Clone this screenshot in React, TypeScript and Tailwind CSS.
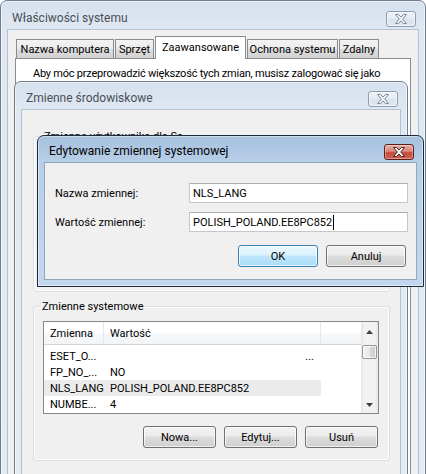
import React from "react";

function CloseX({ active }: { active: boolean }) {
  return (
    <div
      className={
        active
          ? "w-[30px] h-[16px] rounded-[3px] border border-[#5b1e18] bg-[linear-gradient(180deg,#e9aea4_0%,#db8577_45%,#c64a3c_55%,#cf6354_100%)] flex items-center justify-center shadow-[inset_0_0_0_1px_rgba(255,255,255,0.35)]"
          : "w-[30px] h-[16px] rounded-[3px] border border-[#8e9caf] bg-[linear-gradient(180deg,#eef3f8_0%,#e4ebf3_50%,#d8e2ed_51%,#dfe7f1_100%)] flex items-center justify-center shadow-[inset_0_0_0_1px_rgba(255,255,255,0.6)]"
      }
    >
      <svg width="12" height="10" viewBox="0 0 12 10">
        <polygon
          points="0.5,0.5 3.5,0.5 6,3 8.5,0.5 11.5,0.5 7.7,5 11.5,9.5 8.5,9.5 6,7 3.5,9.5 0.5,9.5 4.3,5"
          fill={active ? "#ffffff" : "#eef1f5"}
          stroke={active ? "#4a2a27" : "#838c98"}
          strokeWidth="1"
          strokeLinejoin="round"
        />
      </svg>
    </div>
  );
}

function WinButton({ label, def, w }: { label: string; def?: boolean; w: string }) {
  return (
    <div
      className={
        def
          ? `${w} h-[22px] rounded-[3px] border border-[#3c7fb1] bg-[linear-gradient(180deg,#ecf7fd_0%,#dbf1fc_45%,#bfe7fd_50%,#aadbf6_100%)] flex items-center justify-center shadow-[inset_0_0_0_1px_rgba(255,255,255,0.7)]`
          : `${w} h-[22px] rounded-[3px] border border-[#707070] bg-[linear-gradient(180deg,#f2f2f2_0%,#ebebeb_45%,#dddddd_50%,#cfcfcf_100%)] flex items-center justify-center shadow-[inset_0_0_0_1px_rgba(255,255,255,0.7)]`
      }
    >
      {label}
    </div>
  );
}

function Tab({ label, w, selected }: { label: string; w: string; selected?: boolean }) {
  return (
    <div
      className={
        selected
          ? `${w} h-[23px] -mb-[1px] relative z-10 border border-b-0 border-[#898c95] bg-white flex items-start justify-center pt-[3px] whitespace-nowrap`
          : `${w} h-[19px] border border-b-0 border-[#898c95] bg-[linear-gradient(180deg,#f3f3f3_0%,#ebebeb_50%,#dddddd_51%,#d2d2d2_100%)] flex items-center justify-center whitespace-nowrap`
      }
    >
      {label}
    </div>
  );
}

export default function App() {
  return (
    <div className="relative w-[426px] h-[474px] overflow-hidden bg-white font-['Roboto',sans-serif] text-[11px] leading-[15px] text-black">
      {/* Outer window: Właściwości systemu */}
      <div className="absolute left-0 top-0 w-[426px] h-[520px] flex flex-col rounded-t-[7px] border border-[#707d8c] bg-[linear-gradient(180deg,#d6e1ee_0px,#dfe8f2_28px,#e3ebf4_100%)] shadow-[inset_0_0_0_1px_rgba(255,255,255,0.5)]">
        <div className="h-[28px] shrink-0 flex items-center justify-between pl-[11px] pr-[9px] pt-[7px]">
          <span className="text-[12px] text-[#4a4f57]">Właściwości systemu</span>
          <CloseX active={false} />
        </div>
        <div className="mx-[6px] flex-1 flex flex-col border border-[#b3c1d1] bg-[#f0f0f0] pt-[6px] pl-[7px]">
          <div className="flex items-end gap-[1px] ml-[1px] h-[22px]">
            <Tab label="Nazwa komputera" w="w-[98px]" />
            <Tab label="Sprzęt" w="w-[39px]" />
            <Tab label="Zaawansowane" w="w-[91px]" selected />
            <Tab label="Ochrona systemu" w="w-[91px]" />
            <Tab label="Zdalny" w="w-[40px]" />
          </div>
          <div className="w-[396px] flex-1 border border-[#898c95] bg-white pt-[7px] pl-[17px]">
            <div className="whitespace-nowrap tracking-[-0.22px]">Aby móc przeprowadzić większość tych zmian, musisz zalogować się jako</div>
          </div>
        </div>
      </div>

      {/* Zmienne środowiskowe */}
      <div className="absolute left-[14px] top-[81px] w-[394px] h-[400px] flex flex-col rounded-t-[7px] border border-[#707d8c] bg-[linear-gradient(180deg,#d6e1ee_0px,#dfe8f2_28px,#e3ebf4_100%)] shadow-[inset_0_0_0_1px_rgba(255,255,255,0.5)]">
        <div className="h-[27px] shrink-0 flex items-center justify-between pl-[11px] pr-[9px] pt-[6px]">
          <span className="text-[12px] text-[#4a4f57]">Zmienne środowiskowe</span>
          <CloseX active={false} />
        </div>
        <div className="mx-[6px] flex-1 flex flex-col border border-[#b3c1d1] bg-[#f0f0f0] pl-[11px]">
          {/* user variables group */}
          <div className="relative mt-[26px] w-[357px] h-[156px] shrink-0 rounded-[3px] border border-[#d5dfe5] shadow-[inset_0_0_0_1px_#ffffff]">
            <span className="absolute -top-[8px] left-[9px] px-[1px] bg-[#f0f0f0] whitespace-nowrap">Zmienne użytkownika dla Sa</span>
          </div>
          {/* system variables group */}
          <div className="relative mt-[14px] w-[357px] h-[155px] shrink-0 rounded-[3px] border border-[#d5dfe5] shadow-[inset_0_0_0_1px_#ffffff] pt-[14px] pl-[9px] pr-[11px]">
            <span className="absolute -top-[8px] left-[7px] px-[1px] bg-[#f0f0f0] whitespace-nowrap">Zmienne systemowe</span>
            <div className="w-[336px] h-[93px] border border-[#828790] bg-white flex overflow-hidden">
              <div className="flex-1 flex flex-col">
                <div className="h-[23px] shrink-0 flex border-b border-[#d5d5d5] bg-[linear-gradient(180deg,#ffffff_0%,#ffffff_50%,#f7f8fa_51%,#f3f4f6_100%)]">
                  <div className="w-[60px] border-r border-[#e3e8ee] pl-[6px] flex items-center">Zmienna</div>
                  <div className="w-[217px] border-r border-[#e3e8ee] pl-[6px] flex items-center">Wartość</div>
                  <div className="flex-1" />
                </div>
                <div className="pt-[3px] flex flex-col">
                  <div className="h-[16px] flex items-center w-[277px]">
                    <div className="w-[60px] pl-[6px] whitespace-nowrap">ESET_O...</div>
                    <div className="w-[217px] pr-[7px] flex justify-end">...</div>
                  </div>
                  <div className="h-[16px] flex items-center w-[277px]">
                    <div className="w-[60px] pl-[6px] whitespace-nowrap">FP_NO_...</div>
                    <div className="w-[217px] pl-[6px]">NO</div>
                  </div>
                  <div className="h-[16px] flex items-center w-[277px] bg-[#ebebeb]">
                    <div className="w-[60px] pl-[6px] whitespace-nowrap">NLS_LANG</div>
                    <div className="w-[217px] pl-[6px] whitespace-nowrap">POLISH_POLAND.EE8PC852</div>
                  </div>
                  <div className="h-[16px] flex items-center w-[277px]">
                    <div className="w-[60px] pl-[6px] whitespace-nowrap">NUMBE...</div>
                    <div className="w-[217px] pl-[6px]">4</div>
                  </div>
                </div>
              </div>
              {/* scrollbar */}
              <div className="w-[17px] shrink-0 flex flex-col bg-[linear-gradient(90deg,#e5e5e5_0%,#f2f2f2_20%,#f2f2f2_80%,#e5e5e5_100%)]">
                <div className="h-[20px] shrink-0 flex items-center justify-center">
                  <svg width="7" height="4" viewBox="0 0 7 4">
                    <polygon points="3.5,0 7,4 0,4" fill="#404040" />
                  </svg>
                </div>
                <div className="mt-[3px] mx-[1px] h-[14px] rounded-[2px] border border-[#979797] bg-[linear-gradient(90deg,#f3f3f3_0%,#e8e8e8_50%,#d9d9d9_51%,#d0d0d0_100%)] shadow-[inset_0_0_0_1px_rgba(255,255,255,0.7)]" />
                <div className="flex-1" />
                <div className="h-[17px] shrink-0 flex items-center justify-center">
                  <svg width="7" height="4" viewBox="0 0 7 4">
                    <polygon points="0,0 7,0 3.5,4" fill="#404040" />
                  </svg>
                </div>
              </div>
            </div>
            <div className="mt-[12px] flex justify-end gap-[8px]">
              <WinButton label="Nowa..." w="w-[73px]" />
              <WinButton label="Edytuj..." w="w-[73px]" />
              <WinButton label="Usuń" w="w-[73px]" />
            </div>
          </div>
        </div>
      </div>

      {/* Edytowanie zmiennej systemowej (active) */}
      <div className="absolute left-[37px] top-[135px] w-[387px] h-[152px] flex flex-col rounded-t-[7px] border border-[#1d2a3a] bg-[linear-gradient(180deg,#a6c0dd_0px,#b8cfe8_27px,#c2d7ee_100%)] shadow-[inset_0_0_0_1px_rgba(255,255,255,0.45)]">
        <div className="h-[26px] shrink-0 flex items-center justify-between pl-[11px] pr-[9px] pt-[5px]">
          <span className="text-[12px] text-black">Edytowanie zmiennej systemowej</span>
          <CloseX active />
        </div>
        <div className="mx-[6px] mb-[6px] flex-1 flex flex-col border border-[#8fa7c1] bg-[#f0f0f0] pt-[20px]">
          <div className="flex items-center">
            <div className="w-[144px] pl-[10px]">Nazwa zmiennej:</div>
            <div className="w-[219px] h-[20px] border border-[#c3c7ce] border-t-[#abadb3] bg-white flex items-center pl-[3px]">NLS_LANG</div>
          </div>
          <div className="flex items-center mt-[9px]">
            <div className="w-[144px] pl-[10px]">Wartość zmiennej:</div>
            <div className="w-[219px] h-[20px] border border-[#c3c7ce] border-t-[#abadb3] bg-white flex items-center pl-[3px]">
              <span>POLISH_POLAND.EE8PC852</span>
              <span className="ml-[1px] w-[1px] h-[15px] bg-black" />
            </div>
          </div>
          <div className="mt-[13px] flex justify-end gap-[8px] pr-[10px]">
            <WinButton label="OK" def w="w-[80px]" />
            <WinButton label="Anuluj" w="w-[80px]" />
          </div>
        </div>
      </div>
    </div>
  );
}
